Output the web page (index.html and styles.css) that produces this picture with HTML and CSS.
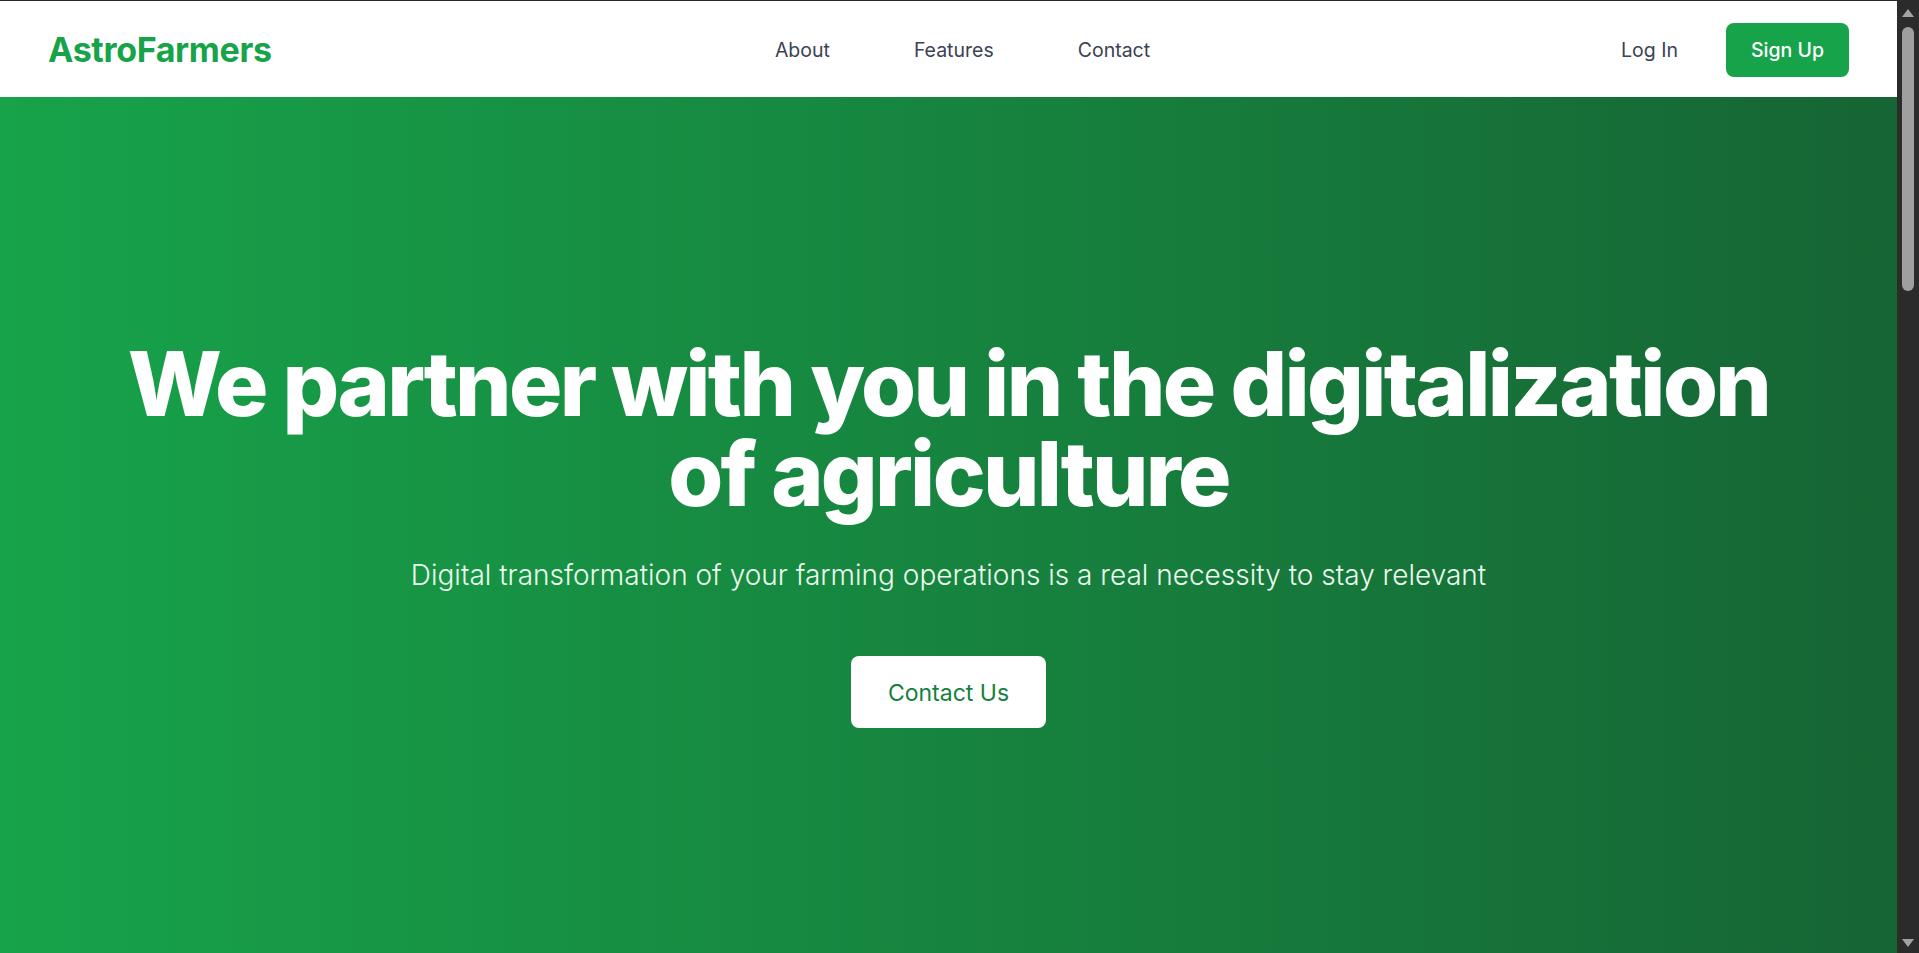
FILE: index.html
```html
<!DOCTYPE html>
<html lang="en">
<head>
<meta charset="utf-8">
<title>AstroFarmers</title>
<link rel="stylesheet" href="styles.css">
</head>
<body>
<div class="window">
  <div class="page">
    <header class="header">
      <a class="logo" href="#">AstroFarmers</a>
      <nav class="nav">
        <a href="#">About</a>
        <a href="#">Features</a>
        <a href="#">Contact</a>
      </nav>
      <div class="actions">
        <a class="login" href="#">Log In</a>
        <a class="signup" href="#">Sign Up</a>
      </div>
    </header>
    <section class="hero">
      <h1 class="hero-title">We partner with you in the digitalization of agriculture</h1>
      <p class="hero-sub">Digital transformation of your farming operations is a real necessity to stay relevant</p>
      <a class="hero-btn" href="#">Contact Us</a>
    </section>
  </div>
  <div class="scrollbar">
    <svg class="arrow" width="14" height="10" viewBox="0 0 14 10"><path d="M7 1 L13 9 L1 9 Z" fill="#a3a3a3"/></svg>
    <div class="thumb"></div>
    <div class="track-rest"></div>
    <svg class="arrow" width="14" height="10" viewBox="0 0 14 10"><path d="M1 1 L13 1 L7 9 Z" fill="#a3a3a3"/></svg>
  </div>
</div>
</body>
</html>
```
FILE: styles.css
```css
* { box-sizing: border-box; }
html, body { margin: 0; padding: 0; height: 100%; overflow: hidden; }
body { font-family: Inter, "Noto Sans", sans-serif; background: #2b2b2b; }
a { text-decoration: none; }

.window {
  display: grid;
  grid-template-columns: 1fr 22px;
  height: 953px;
  border-top: 1px solid #2b2b2b;
}

.page {
  display: flex;
  flex-direction: column;
  min-width: 0;
  background: #fff;
}

.header {
  height: 96px;
  flex: none;
  display: flex;
  align-items: center;
  padding: 1px 48px 0;
  background: #fff;
}
.logo {
  flex: 1;
  color: #16a34a;
  font-size: 34px;
  font-weight: 700;
  letter-spacing: -0.01em;
}
.nav {
  display: flex;
  gap: 84px;
  margin-left: 28px;
}
.nav a, .login {
  color: #3b4252;
  font-size: 19.5px;
  font-weight: 400;
}
.actions {
  flex: 1;
  display: flex;
  justify-content: flex-end;
  align-items: center;
  gap: 48px;
}
.signup {
  background: #16a34a;
  color: #fff;
  font-size: 19.5px;
  font-weight: 500;
  line-height: 30px;
  padding: 12px 25px;
  border-radius: 8px;
}

.hero {
  flex: 1;
  display: flex;
  flex-direction: column;
  align-items: center;
  text-align: center;
  padding-top: 242px;
  background: linear-gradient(to right, #17a34a, #166534);
  color: #fff;
}
.hero-title {
  margin: 0;
  max-width: 1710px;
  font-size: 89px;
  line-height: 90px;
  font-weight: 800;
  letter-spacing: -0.03em;
}
.hero-sub {
  margin: 38px 0 0;
  font-size: 28px;
  line-height: 36px;
  font-weight: 300;
  color: #eafbee;
}
.hero-btn {
  margin-top: 63px;
  background: #fff;
  color: #15803d;
  font-size: 23px;
  font-weight: 400;
  line-height: 32px;
  padding: 21px 37px 19px;
  border-radius: 8px;
}

.scrollbar {
  display: flex;
  flex-direction: column;
  align-items: center;
  background: #2b2b2b;
  padding: 7px 0 5px;
}
.arrow { flex: none; }
.thumb {
  margin-top: 9px;
  width: 12px;
  height: 264px;
  border-radius: 6px;
  background: #9f9f9f;
}
.track-rest { flex: 1; }
```
